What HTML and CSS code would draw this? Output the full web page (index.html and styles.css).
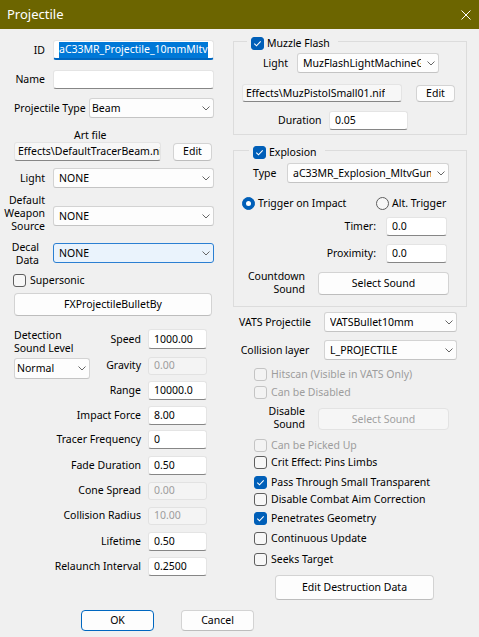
FILE: index.html
```html
<!DOCTYPE html>
<html>
<head>
<meta charset="utf-8">
<title>Projectile</title>
<link rel="stylesheet" href="styles.css">
</head>
<body>
<div class="titlebar">
  <span class="title">Projectile</span>
  <svg class="close" viewBox="0 0 10 10"><path d="M0.5 0.5 L9.5 9.5 M9.5 0.5 L0.5 9.5" stroke="#fff" stroke-width="1" fill="none"/></svg>
</div>
<div class="main">
  <div class="left">
    <div class="row h20 mt11">
      <span class="lbl lbl-r w45">ID</span>
      <div class="edit focus w161"><span class="sel">aC33MR_Projectile_10mmMltv</span></div>
    </div>
    <div class="row h20 mt9">
      <span class="lbl lbl-r w45">Name</span>
      <div class="edit w161"></div>
    </div>
    <div class="row h20 mt9 pl14">
      <span class="lbl pt-lbl">Projectile Type</span>
      <div class="combo w125 tight"><span class="ctext">Beam</span><svg class="chev" viewBox="0 0 8 5"><path d="M0.5 0.5 L4 4 L7.5 0.5"/></svg></div>
    </div>
    <div class="row h14 mt10 artlbl"><span class="lbl">Art file</span></div>
    <div class="row h19 pl14">
      <div class="edit ro w147 h19"><span class="clip">Effects\DefaultTracerBeam.nif</span></div>
      <div class="btn w39 h18 ml12">Edit</div>
    </div>
    <div class="row h20 mt7">
      <span class="lbl lbl-r w45">Light</span>
      <div class="combo w161"><span class="ctext">NONE</span><svg class="chev" viewBox="0 0 8 5"><path d="M0.5 0.5 L4 4 L7.5 0.5"/></svg></div>
    </div>
    <div class="row top mt6">
      <span class="lbl lbl-r w45">Default<br>Weapon<br>Source</span>
      <div class="combo w161 mt12"><span class="ctext">NONE</span><svg class="chev" viewBox="0 0 8 5"><path d="M0.5 0.5 L4 4 L7.5 0.5"/></svg></div>
    </div>
    <div class="row top mt8">
      <span class="lbl lbl-r w39">Decal<br>Data</span>
      <div class="combo focus-combo w161 mt2"><span class="ctext">NONE</span><svg class="chev" viewBox="0 0 8 5"><path d="M0.5 0.5 L4 4 L7.5 0.5"/></svg></div>
    </div>
    <div class="row h13 mt7 pl13">
      <span class="cb"></span><span class="cblbl">Supersonic</span>
    </div>
    <div class="row mt6 pl14">
      <div class="btn w198 h23">FXProjectileBulletBy</div>
    </div>
    <div class="det mt13">
      <div class="dcol">
        <span class="lbl">Detection<br>Sound Level</span>
        <div class="combo w76 h21 mt3 tighter"><span class="ctext">Normal</span><svg class="chev" viewBox="0 0 8 5"><path d="M0.5 0.5 L4 4 L7.5 0.5"/></svg></div>
      </div>
      <div class="fcol">
        <div class="frow"><span class="lbl">Speed</span><div class="edit num h20">1000.00</div></div>
        <div class="frow mt7"><span class="lbl">Gravity</span><div class="edit num dis h18">0.00</div></div>
        <div class="frow mt6"><span class="lbl">Range</span><div class="edit num">10000.0</div></div>
        <div class="frow mt6"><span class="lbl">Impact Force</span><div class="edit num">8.00</div></div>
        <div class="frow mt5"><span class="lbl">Tracer Frequency</span><div class="edit num">0</div></div>
        <div class="frow mt7"><span class="lbl">Fade Duration</span><div class="edit num">0.50</div></div>
        <div class="frow mt6"><span class="lbl">Cone Spread</span><div class="edit num dis h18">0.00</div></div>
        <div class="frow mt6"><span class="lbl">Collision Radius</span><div class="edit num dis h18">10.00</div></div>
        <div class="frow mt7"><span class="lbl">Lifetime</span><div class="edit num">0.50</div></div>
        <div class="frow mt6"><span class="lbl">Relaunch Interval</span><div class="edit num">0.2500</div></div>
      </div>
    </div>
  </div>

  <div class="right">
    <div class="group g-muzzle">
      <div class="gtitle gt-muzzle"><span class="cb on"><svg viewBox="0 0 13 13"><path d="M3.3 6.6 L5.5 8.8 L9.7 4.3"/></svg></span><span>Muzzle Flash</span></div>
      <div class="row h20 mt3 pl29">
        <span class="lbl w34">Light</span>
        <div class="combo w142"><span class="ctext">MuzFlashLightMachineGun</span><svg class="chev" viewBox="0 0 8 5"><path d="M0.5 0.5 L4 4 L7.5 0.5"/></svg></div>
      </div>
      <div class="row h18 mt11 pl8">
        <div class="edit ro w160 h18"><span class="clip">Effects\MuzPistolSmall01.nif</span></div>
        <div class="btn w39 h17 ml14">Edit</div>
      </div>
      <div class="row h19 mt9 pl44">
        <span class="lbl w51">Duration</span>
        <div class="edit w79 h19">0.05</div>
      </div>
    </div>

    <div class="group g-expl">
      <div class="gtitle gt-expl"><span class="cb on"><svg viewBox="0 0 13 13"><path d="M3.3 6.6 L5.5 8.8 L9.7 4.3"/></svg></span><span>Explosion</span></div>
      <div class="row h20 mt4 pl19">
        <span class="lbl w34">Type</span>
        <div class="combo w162"><span class="ctext">aC33MR_Explosion_MltvGun</span><svg class="chev" viewBox="0 0 8 5"><path d="M0.5 0.5 L4 4 L7.5 0.5"/></svg></div>
      </div>
      <div class="row h13 mt14 pl8">
        <div class="ropt w134"><span class="radio on"></span><span>Trigger on Impact</span></div>
        <div class="ropt"><span class="radio"></span><span>Alt. Trigger</span></div>
      </div>
      <div class="frow2 mt7"><span class="lbl">Timer:</span><div class="edit w61 h19">0.0</div></div>
      <div class="frow2 mt8"><span class="lbl">Proximity:</span><div class="edit w61 h19">0.0</div></div>
      <div class="row top mt7">
        <span class="lbl lbl-r w71">Countdown<br>Sound</span>
        <div class="btn w131 h23 mt2 ml13">Select Sound</div>
      </div>
    </div>

    <div class="row h20 mt5">
      <span class="lbl side-lbl">VATS Projectile</span>
      <div class="combo w133"><span class="ctext">VATSBullet10mm</span><svg class="chev" viewBox="0 0 8 5"><path d="M0.5 0.5 L4 4 L7.5 0.5"/></svg></div>
    </div>
    <div class="row h20 mt8">
      <span class="lbl side-lbl">Collision layer</span>
      <div class="combo w133"><span class="ctext">L_PROJECTILE</span><svg class="chev" viewBox="0 0 8 5"><path d="M0.5 0.5 L4 4 L7.5 0.5"/></svg></div>
    </div>
    <div class="row h13 mt8 pl21 disabled"><span class="cb dis"></span><span class="cblbl">Hitscan (Visible in VATS Only)</span></div>
    <div class="row h13 mt5 pl21 disabled"><span class="cb dis"></span><span class="cblbl">Can be Disabled</span></div>
    <div class="row top mt6">
      <span class="lbl lbl-r w72 lh13">Disable<br>Sound</span>
      <div class="btn btn-dis w131 h22 mt3 ml13">Select Sound</div>
    </div>
    <div class="row h13 mt9 pl21 disabled"><span class="cb dis"></span><span class="cblbl">Can be Picked Up</span></div>
    <div class="row h13 mt4 pl21"><span class="cb"></span><span class="cblbl">Crit Effect: Pins Limbs</span></div>
    <div class="row h13 mt7 pl21"><span class="cb on"><svg viewBox="0 0 13 13"><path d="M3.3 6.6 L5.5 8.8 L9.7 4.3"/></svg></span><span class="cblbl">Pass Through Small Transparent</span></div>
    <div class="row h13 mt4 pl21"><span class="cb"></span><span class="cblbl">Disable Combat Aim Correction</span></div>
    <div class="row h13 mt6 pl21"><span class="cb on"><svg viewBox="0 0 13 13"><path d="M3.3 6.6 L5.5 8.8 L9.7 4.3"/></svg></span><span class="cblbl">Penetrates Geometry</span></div>
    <div class="row h13 mt7 pl21"><span class="cb"></span><span class="cblbl">Continuous Update</span></div>
    <div class="row h13 mt8 pl21"><span class="cb"></span><span class="cblbl">Seeks Target</span></div>
    <div class="row mt9">
      <div class="btn w159 h25 ml42">Edit Destruction Data</div>
    </div>
  </div>
</div>
<div class="footer">
  <div class="btn btn-default w73 h21">OK</div>
  <div class="btn w73 h21">Cancel</div>
</div>
</body>
</html>
```

FILE: styles.css
```css
* { box-sizing: border-box; }
html, body { margin: 0; padding: 0; }
body {
  width: 479px;
  height: 637px;
  overflow: hidden;
  background: #f0f0f0;
  font-family: "Noto Sans", "Liberation Sans", sans-serif;
  font-size: 10.5px;
  line-height: 13px;
  color: #000;
}

.titlebar {
  height: 29px;
  background: #6c6500;
  color: #fff;
  display: flex;
  align-items: center;
  justify-content: space-between;
  padding: 0 8px 0 7px;
}
.title { font-size: 13px; }
.close { width: 10px; height: 10px; display: block; }

.main { display: flex; height: 581px; }
.left { width: 233px; flex: none; }
.right { width: 234px; flex: none; }

.row { display: flex; align-items: center; }
.row.top { align-items: flex-start; }

.lbl { white-space: nowrap; flex: none; }
.lbl-r { text-align: right; }
.lh13 { line-height: 12.5px; }
.w45 { width: 45px; margin-right: 8px; }
.w39 { width: 39px; margin-right: 14px; }
.w34 { width: 34px; }
.w51 { width: 51px; }
.w71 { width: 71px; }
.w72 { width: 72px; }
.pt-lbl { width: 75px; }
.artlbl { padding-left: 74px; }
.side-lbl { width: 84px; margin-right: 7px; text-align: center; }

/* spacing */
.mt2 { margin-top: 2px; }
.mt3 { margin-top: 3px; }
.mt4 { margin-top: 4px; }
.mt5 { margin-top: 5px; }
.mt6 { margin-top: 6px; }
.mt7 { margin-top: 7px; }
.mt8 { margin-top: 8px; }
.mt9 { margin-top: 9px; }
.mt10 { margin-top: 10px; }
.mt11 { margin-top: 11px; }
.mt12 { margin-top: 12px; }
.mt13 { margin-top: 13px; }
.mt14 { margin-top: 14px; }
.ml12 { margin-left: 12px; }
.ml13 { margin-left: 13px; }
.ml14 { margin-left: 14px; }
.ml42 { margin-left: 42px; }
.pl8 { padding-left: 8px; }
.pl13 { padding-left: 13px; }
.pl14 { padding-left: 14px; }
.pl19 { padding-left: 19px; }
.pl21 { padding-left: 21px; }
.pl29 { padding-left: 29px; }
.pl44 { padding-left: 44px; }

/* sizes */
.h13 { height: 13px; }
.h14 { height: 14px; }
.h17 { height: 17px; }
.h18 { height: 18px; }
.h19 { height: 19px; }
.h20 { height: 20px; }
.h21 { height: 21px; }
.h22 { height: 22px; }
.h23 { height: 23px; }
.h25 { height: 25px; }
.w39 { width: 39px; }
.w61 { width: 61px; }
.w73 { width: 73px; }
.w76 { width: 76px; }
.w79 { width: 79px; }
.w125 { width: 125px; }
.w131 { width: 131px; }
.w133 { width: 133px; }
.w134 { width: 134px; }
.w142 { width: 142px; }
.w147 { width: 147px; }
.w159 { width: 159px; }
.w160 { width: 160px; }
.w161 { width: 161px; }
.w162 { width: 162px; }
.w198 { width: 198px; }
.lbl.w39 { width: 39px; }

/* text box */
.edit {
  height: 19px;
  flex: none;
  background: #fff;
  border: 1px solid #e4e4e4;
  border-bottom-color: #868686;
  border-radius: 3px;
  display: flex;
  align-items: center;
  padding-left: 5px;
  white-space: nowrap;
  overflow: hidden;
}
.edit.h20 { height: 20px; }
.edit.h18 { height: 18px; }
.edit.focus {
  height: 20px;
  border-bottom: 2px solid #0067c0;
}
.sel {
  background: #0078d7;
  color: #fff;
  padding: 1px 0 2px;
  line-height: 13px;
}
.edit.ro {
  background: #f7f7f7;
  padding-left: 3px;
}
.clip { overflow: hidden; white-space: nowrap; }
.edit.dis {
  background: #f4f4f4;
  border-color: #e2e2e2;
  color: #9d9d9d;
}
.num { width: 59px; margin-left: 7px; }

/* combobox */
.combo {
  height: 20px;
  flex: none;
  background: #fdfdfd;
  border: 1px solid #d3d3d3;
  border-bottom-color: #c4c4c4;
  border-radius: 3px;
  display: flex;
  align-items: center;
  padding: 0 3px 0 5px;
}
.combo.tight { padding-left: 2px; }
.combo.tighter { padding-left: 2px; }
.combo.h21 { height: 21px; }
.combo.focus-combo {
  background: #eaf3fc;
  border-color: #2b7fd2;
}
.ctext {
  flex: 1;
  overflow: hidden;
  white-space: nowrap;
}
.chev {
  width: 8px;
  height: 5px;
  flex: none;
  margin-left: 6px;
  fill: none;
  stroke: #666;
  stroke-width: 1;
}

/* buttons */
.btn {
  flex: none;
  background: #fdfdfd;
  border: 1px solid #d3d3d3;
  border-bottom-color: #bdbdbd;
  border-radius: 4px;
  display: flex;
  align-items: center;
  justify-content: center;
  white-space: nowrap;
}
.btn-dis {
  background: #f6f6f6;
  border-color: #e3e3e3;
  color: #a0a0a0;
}
.btn-default {
  border-color: #0067c0;
}

/* checkbox */
.cb {
  width: 13px;
  height: 13px;
  flex: none;
  border: 1px solid #5e5e5e;
  border-radius: 3px;
  background: #f7f7f7;
  display: flex;
}
.cb svg { width: 13px; height: 13px; margin: -1px; fill: none; stroke: #fff; stroke-width: 1.1; }
.cb.on { background: #005fb8; border-color: #005fb8; }
.cb.dis { border-color: #c4c4c4; background: #f3f3f3; }
.cblbl { margin-left: 4px; white-space: nowrap; }
.disabled { color: #9d9d9d; }

/* radio */
.ropt { display: flex; align-items: center; flex: none; }
.radio {
  width: 13px;
  height: 13px;
  border-radius: 50%;
  border: 1px solid #5e5e5e;
  background: #f7f7f7;
  margin-right: 3px;
  display: flex;
  align-items: center;
  justify-content: center;
  flex: none;
}
.radio.on { background: #005fb8; border-color: #005fb8; }
.radio.on::after {
  content: "";
  width: 5px;
  height: 5px;
  border-radius: 50%;
  background: #fff;
}

/* group boxes */
.group {
  border: 1px solid #dcdcdc;
}
.g-muzzle { margin-top: 12px; height: 94px; }
.g-expl { margin-top: 15px; height: 157px; }
.gtitle {
  display: flex;
  align-items: center;
  width: fit-content;
  height: 13px;
  background: #f0f0f0;
  padding: 0 8px 0 4px;
  margin-top: -5px;
}
.gtitle .cb { margin-right: 3px; }
.gt-muzzle { margin-left: 13px; }
.gt-expl { margin-left: 15px; }

.frow2 {
  display: flex;
  align-items: center;
  justify-content: flex-end;
  height: 19px;
  padding-right: 19px;
}
.frow2 .edit { margin-left: 10px; }

/* detection section: label/combo stack and the field list share one grid cell */
.det {
  display: grid;
  grid-template-columns: 193px;
  margin-left: 14px;
}
.dcol, .fcol { grid-area: 1 / 1; }
.dcol { width: 76px; display: flex; flex-direction: column; }
.fcol { display: flex; flex-direction: column; }
.frow {
  display: flex;
  align-items: center;
  justify-content: flex-end;
  height: 19px;
}
.frow:first-child { height: 20px; }
.frow .edit.dis { height: 18px; }

.footer {
  display: flex;
  padding-left: 81px;
  gap: 27px;
}
```
